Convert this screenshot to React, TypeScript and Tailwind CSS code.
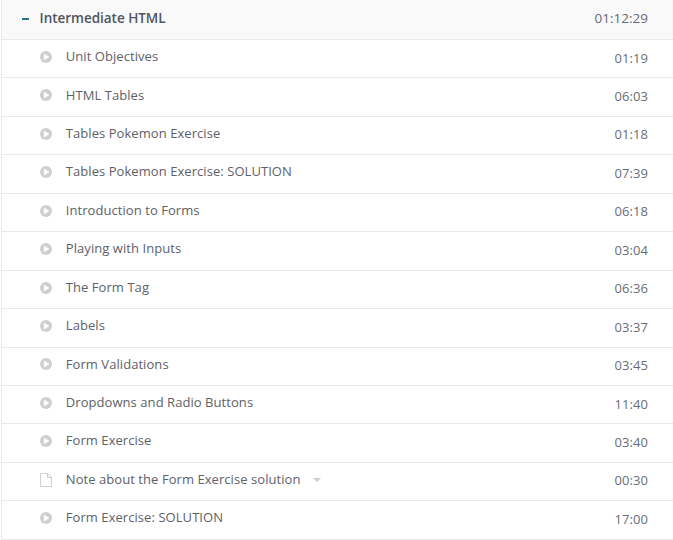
type Lecture = { title: string; time: string; note?: boolean };

const lectures: Lecture[] = [
  { title: 'Unit Objectives', time: '01:19' },
  { title: 'HTML Tables', time: '06:03' },
  { title: 'Tables Pokemon Exercise', time: '01:18' },
  { title: 'Tables Pokemon Exercise: SOLUTION', time: '07:39' },
  { title: 'Introduction to Forms', time: '06:18' },
  { title: 'Playing with Inputs', time: '03:04' },
  { title: 'The Form Tag', time: '06:36' },
  { title: 'Labels', time: '03:37' },
  { title: 'Form Validations', time: '03:45' },
  { title: 'Dropdowns and Radio Buttons', time: '11:40' },
  { title: 'Form Exercise', time: '03:40' },
  { title: 'Note about the Form Exercise solution', time: '00:30', note: true },
  { title: 'Form Exercise: SOLUTION', time: '17:00' },
];

function PlayIcon() {
  return (
    <svg width="12" height="12" viewBox="0 0 12 12">
      <circle cx="6" cy="6" r="6" fill="#cfcfd2" />
      <path d="M4.2 3.1v5.8L9 6z" fill="#fff" stroke="#fff" strokeWidth=".6" strokeLinejoin="round" />
    </svg>
  );
}

function FileIcon() {
  return (
    <svg width="12" height="14" viewBox="0 0 12 14" fill="none" stroke="#cfcfd2">
      <path d="M.5.5h7l4 4v9H.5zM7.5.5v4h4" />
    </svg>
  );
}

export default function App() {
  return (
    <div className="h-[540px] w-[673px] overflow-hidden bg-white pl-px font-['Open_Sans',sans-serif] text-[13px] text-[#5e6168]">
      <div className="border-l border-[#e8e9eb]">
        <div className="flex h-10 items-center border-b border-[#e8e9eb] bg-[#f9f9f9] pr-[25px] pb-[3px] pl-5">
          <div className="mt-[2px] h-[2px] w-[7px] bg-[#2c7389]" />
          <div className="ml-[10.6px] flex-1 text-[13.5px] font-semibold tracking-[-0.03px] text-[#50555e]">Intermediate HTML</div>
          <div className="text-[13.5px] text-[#666a73]">01:12:29</div>
        </div>
        {lectures.map(({ title, time, note }) => (
          <div key={title} className="flex h-[38.45px] items-center border-b border-[#e8e9eb] pr-[25px] pb-[3px] pl-[38px]">
            <div className="mb-[0.6px] flex w-[25.8px]">{note ? <FileIcon /> : <PlayIcon />}</div>
            <div className="mb-[0.8px] flex flex-1 items-center tracking-[0.06px]">
              {title}
              {note && <div className="ml-[13px] border-x-4 border-t-4 border-x-transparent border-t-[#cfcfd2]" />}
            </div>
            <div className="mt-[2.3px] tracking-[0.08px] text-[#696d77]">{time}</div>
          </div>
        ))}
      </div>
    </div>
  );
}
